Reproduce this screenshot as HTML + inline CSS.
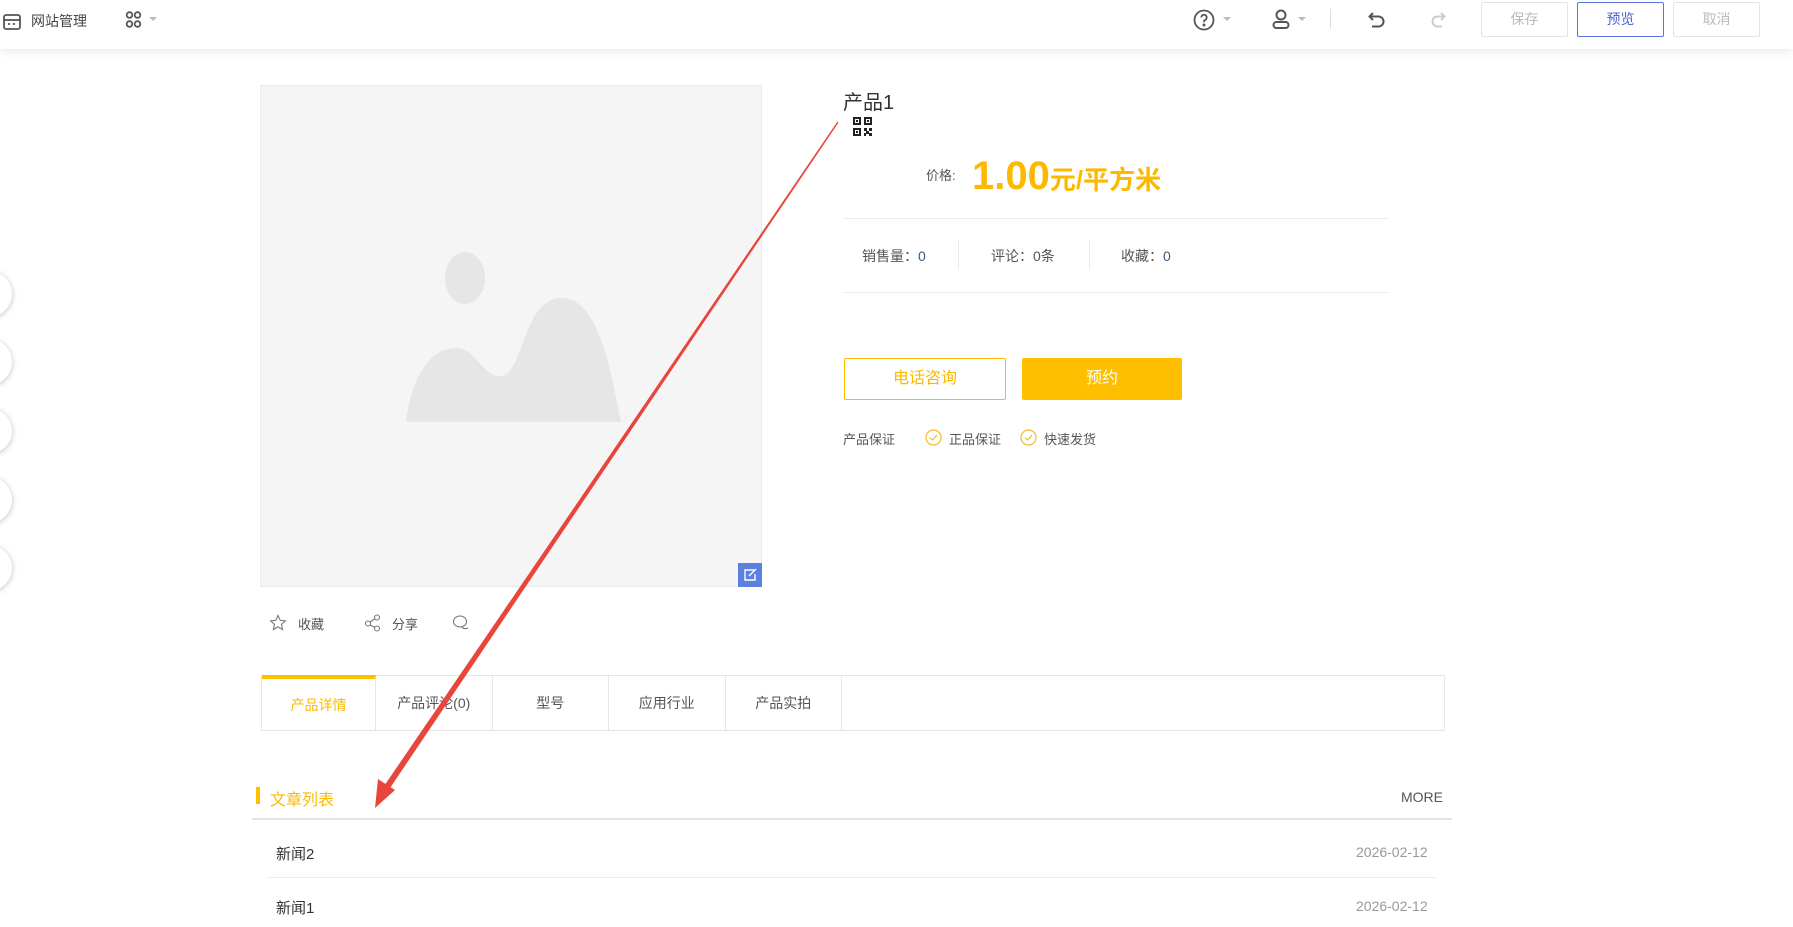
<!DOCTYPE html>
<html><head><meta charset="utf-8"><style>
*{margin:0;padding:0;box-sizing:border-box}
body{width:1793px;height:927px;overflow:hidden;background:#fff;position:relative;font-family:"Liberation Sans","Noto Sans CJK SC",sans-serif;color:#333}
.a{position:absolute}
.hdr{left:0;top:0;width:1793px;height:49px;background:#fff;box-shadow:0 2px 10px rgba(0,0,0,.09);z-index:2}
.btn{position:absolute;top:2px;height:35px;width:87px;border:1px solid #e4e4e4;border-radius:2px;font-size:14px;color:#bbb;text-align:center;line-height:33px}
.t{font-size:14px;color:#555;white-space:nowrap}
.tab{position:absolute;top:0;height:55px;width:116.5px;border-right:1px solid #e6e6e6;text-align:center;line-height:55px;font-size:14px;color:#555}
.circ{position:absolute;left:-34px;width:46px;height:46px;border-radius:50%;background:#fff;box-shadow:0 1px 6px rgba(0,0,0,.25)}
</style></head><body>
<div class="a hdr">
 <svg class="a" style="left:2px;top:12px" width="20" height="20" viewBox="0 0 20 20" fill="none" stroke="#555" stroke-width="1.8"><rect x="2" y="3" width="16" height="14" rx="2"/><line x1="2" y1="8" x2="18" y2="8"/><line x1="6" y1="12" x2="8" y2="12"/><line x1="11" y1="12" x2="13" y2="12"/></svg>
 <div class="a t" style="left:31px;top:11px;font-size:14px;color:#444">网站管理</div>
 <svg class="a" style="left:125px;top:10px" width="18" height="20" viewBox="0 0 18 20" fill="none" stroke="#555" stroke-width="1.8"><circle cx="4.5" cy="5" r="2.8"/><circle cx="12.5" cy="5" r="2.8"/><circle cx="4.5" cy="14" r="2.8"/><circle cx="12.5" cy="14" r="2.8"/></svg>
 <div class="a" style="left:149px;top:17px;border:4px solid transparent;border-top-color:#bbb"></div>
 <svg class="a" style="left:1192px;top:8px" width="24" height="24" viewBox="0 0 24 24" fill="none" stroke="#555" stroke-width="1.8"><circle cx="12" cy="12" r="9.5"/><path d="M9.3 9.5a2.7 2.7 0 1 1 3.8 2.4c-.8.4-1.1 1-1.1 1.8v.6"/><circle cx="12" cy="17" r=".6" fill="#555"/></svg>
 <div class="a" style="left:1223px;top:17px;border:4px solid transparent;border-top-color:#bbb"></div>
 <svg class="a" style="left:1270px;top:8px" width="22" height="24" viewBox="0 0 22 24" fill="none" stroke="#555" stroke-width="2"><circle cx="11" cy="7" r="4.5"/><rect x="3.5" y="14" width="15" height="6" rx="3"/></svg>
 <div class="a" style="left:1298px;top:17px;border:4px solid transparent;border-top-color:#bbb"></div>
 <div class="a" style="left:1330px;top:9px;width:1px;height:20px;background:#ddd"></div>
 <svg class="a" style="left:1366px;top:9px" width="22" height="22" viewBox="0 0 22 22" fill="none" stroke="#555" stroke-width="2"><path d="M7 4 3.5 7.5 7 11"/><path d="M4 7.5h8.5a5 5 0 0 1 0 10H6"/></svg>
 <svg class="a" style="left:1426px;top:9px" width="22" height="22" viewBox="0 0 22 22" fill="none" stroke="#ccc" stroke-width="2"><path d="M15 4l3.5 3.5L15 11"/><path d="M18 7.5h-6.5a5 5 0 0 0 0 10H16"/></svg>
 <div class="btn" style="left:1481px">保存</div>
 <div class="btn" style="left:1577px;border-color:#5b74d9;color:#4a63cf">预览</div>
 <div class="btn" style="left:1673px">取消</div>
</div>

<div class="circ" style="top:271px"></div>
<div class="circ" style="top:339px"></div>
<div class="circ" style="top:408px"></div>
<div class="circ" style="top:477px"></div>
<div class="circ" style="top:545px"></div>

<div class="a" style="left:260px;top:85px;width:502px;height:502px;background:#f5f5f5;border:1px solid #ebebeb">
 <svg class="a" style="left:0;top:0" width="500" height="500"><ellipse cx="204" cy="192" rx="20" ry="26" fill="#e6e6e6"/><path d="M145 336C150 290 170 262 195 262C215 262 220 290 240 290C262 290 262 212 300 212C340 212 350 290 360 336Z" fill="#e6e6e6"/></svg>
 <div class="a" style="right:-1px;bottom:-1px;width:24px;height:24px;background:#5b80e0"><svg width="24" height="24" viewBox="0 0 24 24" fill="none" stroke="#fff" stroke-width="1.4"><path d="M16 7H7v10h10v-6"/><path d="M11 13l7-7"/></svg></div>
</div>

<div class="a" style="left:843px;top:86px;font-size:20px;color:#333">产品1</div>
<svg class="a" style="left:853px;top:117px" width="19" height="19" viewBox="0 0 19 19" fill="#222"><path d="M0 0h8v8H0zM2 2v4h4V2zM11 0h8v8h-8zM13 2v4h4V2zM0 11h8v8H0zM2 13v4h4v-4z"/><rect x="3" y="3" width="2" height="2"/><rect x="14" y="3" width="2" height="2"/><rect x="3" y="14" width="2" height="2"/><rect x="11" y="11" width="3" height="3"/><rect x="16" y="11" width="3" height="3"/><rect x="13" y="14" width="3" height="3"/><rect x="11" y="16" width="2" height="3"/><rect x="16" y="16" width="3" height="3"/></svg>
<div class="a t" style="left:926px;top:165px;font-size:13px">价格:</div>
<div class="a" style="left:972px;top:154px;color:#fdb900;font-weight:bold;white-space:nowrap"><span style="font-size:40px">1.00</span><span style="font-size:26px">元/平方米</span></div>
<div class="a" style="left:843px;top:218px;width:546px;height:1px;background:#ebebeb"></div>
<div class="a t" style="left:862px;top:246px">销售量：<span style="color:#3a5a7a">0</span></div>
<div class="a" style="left:958px;top:240px;width:1px;height:30px;background:#ebebeb"></div>
<div class="a t" style="left:991px;top:246px">评论：0条</div>
<div class="a" style="left:1089px;top:240px;width:1px;height:30px;background:#ebebeb"></div>
<div class="a t" style="left:1121px;top:246px">收藏：<span style="color:#3a5a7a">0</span></div>
<div class="a" style="left:843px;top:292px;width:546px;height:1px;background:#ebebeb"></div>
<div class="a" style="left:844px;top:358px;width:162px;height:42px;border:1px solid #fdb900;border-radius:2px;color:#fdb900;font-size:16px;text-align:center;line-height:40px">电话咨询</div>
<div class="a" style="left:1022px;top:358px;width:160px;height:42px;background:#fdbf00;border-radius:2px;color:#fff;font-size:16px;text-align:center;line-height:42px">预约</div>
<div class="a t" style="left:843px;top:429px;font-size:13px">产品保证</div>
<svg class="a" style="left:925px;top:429px" width="17" height="17" viewBox="0 0 17 17" fill="none" stroke="#f5b92b" stroke-width="1.2"><circle cx="8.5" cy="8.5" r="7.5"/><path d="M5 8.5l2.5 2.5 4.5-5"/></svg>
<div class="a t" style="left:949px;top:429px;font-size:13px">正品保证</div>
<svg class="a" style="left:1020px;top:429px" width="17" height="17" viewBox="0 0 17 17" fill="none" stroke="#f5b92b" stroke-width="1.2"><circle cx="8.5" cy="8.5" r="7.5"/><path d="M5 8.5l2.5 2.5 4.5-5"/></svg>
<div class="a t" style="left:1044px;top:429px;font-size:13px">快速发货</div>

<svg class="a" style="left:269px;top:614px" width="18" height="18" viewBox="0 0 18 18" fill="none" stroke="#777" stroke-width="1.1"><path d="M9 1.5l2.2 4.8 5.2.6-3.9 3.5 1.1 5.1L9 12.9l-4.6 2.6 1.1-5.1L1.6 6.9l5.2-.6z"/></svg>
<div class="a t" style="left:298px;top:614px;font-size:13px">收藏</div>
<svg class="a" style="left:364px;top:614px" width="18" height="18" viewBox="0 0 18 18" fill="none" stroke="#777" stroke-width="1.1"><circle cx="4" cy="9.5" r="2.5"/><circle cx="13" cy="3.5" r="2.5"/><circle cx="13" cy="14.5" r="2.5"/><path d="M6 8l5-3.3M6 11l5 2.5"/></svg>
<div class="a t" style="left:392px;top:614px;font-size:13px">分享</div>
<svg class="a" style="left:452px;top:614px" width="18" height="18" viewBox="0 0 18 18" fill="none" stroke="#777" stroke-width="1.1"><ellipse cx="8" cy="7.5" rx="6.5" ry="5.5"/><path d="M10 13.5c2 1.5 4 1.5 6 .5"/></svg>

<div class="a" style="left:261px;top:675px;width:1184px;height:56px;border:1px solid #e6e6e6">
 <div class="tab" style="left:0;width:114px;color:#fdb900;border-top:4px solid #fdbf00;top:-1px;line-height:53px">产品详情</div>
 <div class="tab" style="left:114px">产品评论(0)</div>
 <div class="tab" style="left:230.5px">型号</div>
 <div class="tab" style="left:347px">应用行业</div>
 <div class="tab" style="left:463.5px">产品实拍</div>
</div>

<div class="a" style="left:256px;top:787px;width:4px;height:17px;background:#fdbf00"></div>
<div class="a" style="left:270px;top:786px;font-size:16px;color:#fdb900">文章列表</div>
<div class="a" style="left:1401px;top:789px;font-size:14px;color:#555">MORE</div>
<div class="a" style="left:252px;top:818px;width:1200px;height:2px;background:#e3e3e3"></div>
<div class="a" style="left:276px;top:843px;font-size:15px;color:#333">新闻2</div>
<div class="a" style="left:1356px;top:844px;font-size:14px;color:#999">2026-02-12</div>
<div class="a" style="left:266px;top:877px;width:1170px;height:1px;background:#eee"></div>
<div class="a" style="left:276px;top:897px;font-size:15px;color:#333">新闻1</div>
<div class="a" style="left:1356px;top:898px;font-size:14px;color:#999">2026-02-12</div>

<svg class="a" style="left:0;top:0;z-index:3" width="1793" height="927"><polygon points="838.6,122.4 837.4,121.6 382.5,788.3 387.5,791.7" fill="#e8463c"/><path d="M375 808l3-29 17 11z" fill="#e8463c"/></svg>
</body></html>
